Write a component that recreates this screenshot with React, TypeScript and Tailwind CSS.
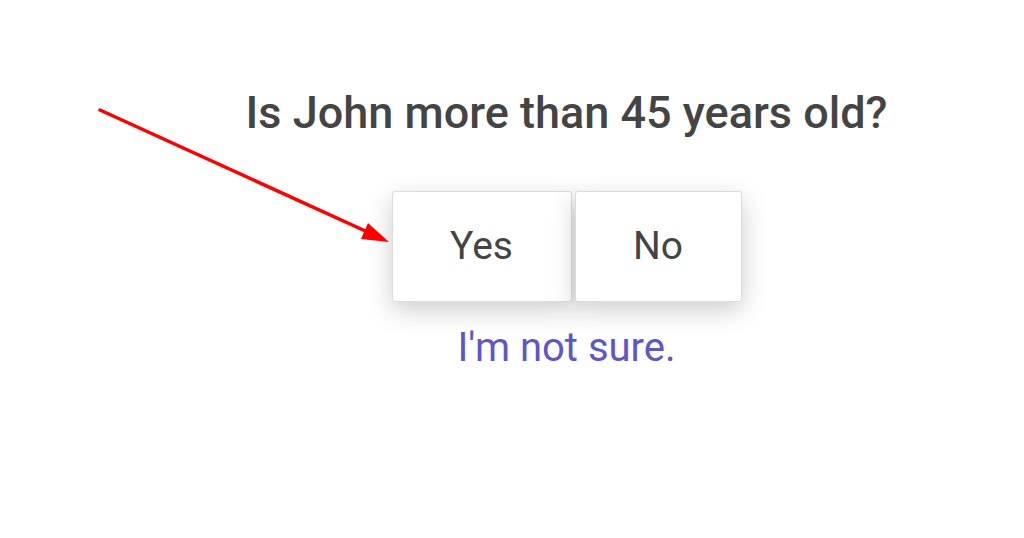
export default function App() {
  return (
    <div className="relative w-[1024px] h-[538px] bg-white font-['Roboto',sans-serif] overflow-hidden">
      <div className="flex flex-col items-center pl-[109px] pt-[85px]">
        <h1 className="text-[45px] leading-[56px] font-medium text-[#444]">Is John more than 45 years old?</h1>
        <div className="flex gap-[3px] mt-[50px]">
          <button className="w-[180px] h-[111px] bg-white border border-[#dcdcdc] rounded-[3px] shadow-[0_8px_26px_rgba(0,0,0,0.2)] text-[39px] text-[#444]">Yes</button>
          <button className="w-[167px] h-[111px] bg-white border border-[#dcdcdc] rounded-[3px] shadow-[0_8px_26px_rgba(0,0,0,0.2)] text-[39px] text-[#444]">No</button>
        </div>
        <a className="mt-[24px] text-[40px] leading-[44px] text-[#5f57c8]">I'm not sure.</a>
      </div>
      <svg className="absolute left-0 top-0" width="1024" height="538">
        <line x1="100" y1="110" x2="372" y2="234" stroke="#ff0000" strokeWidth="3.5" strokeLinecap="round" />
        <polygon points="389,242 361,239 368,223" fill="#ff0000" />
      </svg>
    </div>
  );
}
